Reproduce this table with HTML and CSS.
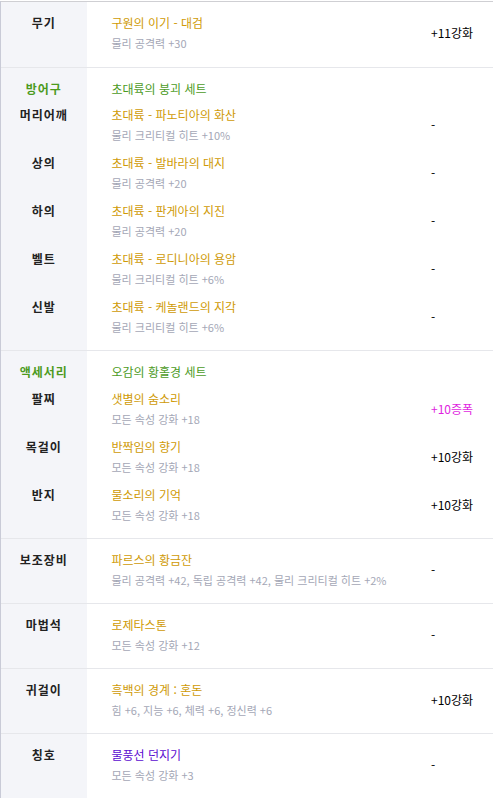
FILE: index.html
```html
<!DOCTYPE html>
<html lang="ko">
<head>
    <meta charset="UTF-8">
    <meta name="viewport" content="width=device-width, initial-scale=1.0">
    <title>장착 장비</title>
    <link rel="stylesheet" href="styles.css">
</head>
<body>
    <table class="equip">
        <colgroup>
            <col class="col-slot">
            <col>
            <col class="col-val">
        </colgroup>

        <tbody class="weapon">
            <tr class="first last">
                <th>무기</th>
                <td><div class="name unique">구원의 이기 - 대검</div><div class="opt">물리 공격력 +30</div></td>
                <td class="val">+11강화</td>
            </tr>
        </tbody>

        <tbody>
            <tr class="first set">
                <th class="setlabel">방어구</th>
                <td><div class="name setname">초대륙의 붕괴 세트</div></td>
                <td class="val"></td>
            </tr>
            <tr>
                <th>머리어깨</th>
                <td><div class="name unique">초대륙 - 파노티아의 화산</div><div class="opt">물리 크리티컬 히트 +10%</div></td>
                <td class="val">-</td>
            </tr>
            <tr>
                <th>상의</th>
                <td><div class="name unique">초대륙 - 발바라의 대지</div><div class="opt">물리 공격력 +20</div></td>
                <td class="val">-</td>
            </tr>
            <tr>
                <th>하의</th>
                <td><div class="name unique">초대륙 - 판게아의 지진</div><div class="opt">물리 공격력 +20</div></td>
                <td class="val">-</td>
            </tr>
            <tr>
                <th>벨트</th>
                <td><div class="name unique">초대륙 - 로디니아의 용암</div><div class="opt">물리 크리티컬 히트 +6%</div></td>
                <td class="val">-</td>
            </tr>
            <tr class="last">
                <th>신발</th>
                <td><div class="name unique">초대륙 - 케놀랜드의 지각</div><div class="opt">물리 크리티컬 히트 +6%</div></td>
                <td class="val">-</td>
            </tr>
        </tbody>

        <tbody class="accessory">
            <tr class="first set">
                <th class="setlabel">액세서리</th>
                <td><div class="name setname">오감의 황홀경 세트</div></td>
                <td class="val"></td>
            </tr>
            <tr>
                <th>팔찌</th>
                <td><div class="name unique">샛별의 숨소리</div><div class="opt">모든 속성 강화 +18</div></td>
                <td class="val amp">+10증폭</td>
            </tr>
            <tr>
                <th>목걸이</th>
                <td><div class="name unique">반짝임의 향기</div><div class="opt">모든 속성 강화 +18</div></td>
                <td class="val">+10강화</td>
            </tr>
            <tr class="last">
                <th>반지</th>
                <td><div class="name unique">물소리의 기억</div><div class="opt">모든 속성 강화 +18</div></td>
                <td class="val">+10강화</td>
            </tr>
        </tbody>

        <tbody>
            <tr class="first last">
                <th>보조장비</th>
                <td><div class="name unique">파르스의 황금잔</div><div class="opt">물리 공격력 +42, 독립 공격력 +42, 물리 크리티컬 히트 +2%</div></td>
                <td class="val">-</td>
            </tr>
        </tbody>

        <tbody>
            <tr class="first last">
                <th>마법석</th>
                <td><div class="name unique">로제타스톤</div><div class="opt">모든 속성 강화 +12</div></td>
                <td class="val">-</td>
            </tr>
        </tbody>

        <tbody>
            <tr class="first last">
                <th>귀걸이</th>
                <td><div class="name unique">흑백의 경계 : 혼돈</div><div class="opt">힘 +6, 지능 +6, 체력 +6, 정신력 +6</div></td>
                <td class="val">+10강화</td>
            </tr>
        </tbody>

        <tbody>
            <tr class="first last">
                <th>칭호</th>
                <td><div class="name rare">물풍선 던지기</div><div class="opt">모든 속성 강화 +3</div></td>
                <td class="val">-</td>
            </tr>
        </tbody>
    </table>
</body>
</html>
```

FILE: styles.css
```css
body {
    margin: 0;
    padding-top: 1px;
    background: #fff;
    font-family: "Noto Sans CJK KR", "Noto Sans", sans-serif;
    font-size: 12px;
    color: #111;
}

.equip {
    width: 100%;
    border-collapse: collapse;
    border-top: 1px solid #cfcfd3;
    table-layout: fixed;
}

.col-slot {
    width: 86px;
}

.col-val {
    width: 62px;
}

.equip tbody + tbody {
    border-top: 1px solid #e6e7eb;
}

.equip th,
.equip td {
    padding: 0 0 8px 0;
    line-height: 20px;
}

.equip tr.first th,
.equip tr.first td {
    padding-top: 11px;
}

.equip tr.set th,
.equip tr.set td {
    padding-bottom: 6px;
}

.equip .accessory tr.set th,
.equip .accessory tr.set td {
    padding-bottom: 7px;
}

.equip tr.last th,
.equip tr.last td {
    padding-bottom: 13px;
}

.equip .weapon tr.last th,
.equip .weapon tr.last td {
    padding-bottom: 14px;
}

.equip th {
    background: #f4f5f9;
    border-left: 1px solid #c9cbd7;
    text-align: center;
    vertical-align: top;
    font-weight: bold;
    letter-spacing: 1px;
    color: #222;
}

.equip td {
    padding-left: 25px;
    vertical-align: top;
    white-space: nowrap;
}

.equip td.val {
    padding-left: 0;
    vertical-align: middle;
    color: #000;
}

.name {
    font-size: 12px;
}

.opt {
    font-size: 11px;
    color: #a4a7b6;
}

.unique {
    color: #cf9a05;
}

.setname,
.equip th.setlabel {
    color: #4c9b1e;
}

.rare {
    color: #5b0bd0;
}

.equip td.amp {
    color: #e01fe0;
}
```
